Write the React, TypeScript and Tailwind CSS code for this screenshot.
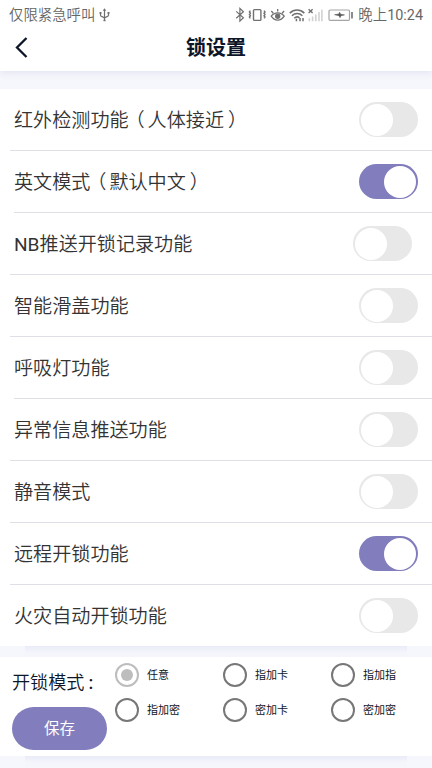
import { useState } from 'react'

interface Setting {
  label: string
  on: boolean
  divider?: string
  end?: string
}

const initialSettings: Setting[] = [
  { label: '红外检测功能（人体接近）', on: false },
  { label: '英文模式（默认中文）', on: true, divider: 'ml-3.5' },
  { label: 'NB推送开锁记录功能', on: false, end: 'pr-5' },
  { label: '智能滑盖功能', on: false },
  { label: '呼吸灯功能', on: false, divider: 'ml-3.5' },
  { label: '异常信息推送功能', on: false },
  { label: '静音模式', on: false },
  { label: '远程开锁功能', on: true },
  { label: '火灾自动开锁功能', on: false },
]

const unlockModes = ['任意', '指加卡', '指加指', '指加密', '密加卡', '密加密']

// Brackets are set half-width with their own side spacing, Latin letters a bit heavier
const partClasses: Record<string, string> = {
  '（': "ml-[6.5px] mr-[3px] [font-feature-settings:'halt']",
  '）': "ml-1 mr-[5.5px] [font-feature-settings:'halt']",
  NB: 'font-normal',
}

function StatusIcons() {
  return (
    <svg width="120" height="16" viewBox="0 0 120 16" fill="none" stroke="#707070" strokeWidth="1.2">
      {/* Bluetooth */}
      <path d="M1.2 4.4l7.2 6.4-3.5 3.4V1.4l3.5 3.3-7.2 6.5" />
      {/* Vibrate */}
      <rect x="18.5" y="2.6" width="7.4" height="10.8" rx="1" strokeWidth="1.4" />
      <path d="M15.4 3.6l-1 1.3 1 1.3-1 1.3 1 1.3-1 1.3 1 1.3M29 3.6l1 1.3-1 1.3 1 1.3-1 1.3 1 1.3-1 1.3" strokeWidth="1.4" />
      {/* Eye comfort */}
      <path d="M36.2 9.2c3.3-4.5 9.7-4.5 13 0-3.3 5.3-9.7 5.3-13 0zM36.3 4l2 2.2M42.7 2v2.6M49.1 4l-2 2.2" strokeWidth="1.3" />
      <circle cx="42.7" cy="9.2" r="2.1" fill="#707070" />
      {/* Wifi */}
      <path d="M54.8 6.1c4.2-4 10.4-4 14.5 0M56.9 8.7c3-2.8 7.4-2.8 10.4 0M59.2 11.2c1.8-1.6 3.8-1.6 5.3-.4" strokeWidth="1.5" />
      <path d="M61.4 11.8v2.4M65 11v3.2M68 11v3.2" strokeWidth="1.5" />
      {/* Signal */}
      <path d="M73.6 2.2l4 3.8M77.6 2.2l-4 3.8" strokeWidth="1.4" />
      <path d="M74.4 11.3v2.9M77.6 9.4v4.8M80.8 7.4v6.8M84 5.1v9.1M86.9 2.7v11.5" stroke="#d2d2d2" strokeWidth="1.6" />
      {/* Battery */}
      <rect x="94" y="3" width="20.5" height="10.4" rx="1.2" stroke="#a5a5a5" />
      <path d="M117 5v6.6" strokeWidth="1.6" />
      <path d="M99.5 7.7l4.4-.7.6-1.8 1.2 2 3.8.7-3.6.8-.8 2-1.2-2z" fill="#555" stroke="#555" strokeWidth=".5" />
    </svg>
  )
}

function Toggle({ on, onClick }: { on: boolean; onClick: () => void }) {
  return (
    <button
      onClick={onClick}
      className={`flex h-[35px] w-[59px] items-center rounded-full px-0.5 ${
        on ? 'justify-end bg-[#827dbc]' : 'justify-start bg-[#e8e8e8]'
      }`}
    >
      <span className="size-8 rounded-full bg-white"></span>
    </button>
  )
}

// Soft strip that shows under a card
function CardShadow() {
  return <div className="mx-[25px] h-[11px] bg-linear-to-b from-[#e9ecf7] to-[#f5f6fc] to-60%"></div>
}

export default function App() {
  const [settings, setSettings] = useState(initialSettings)
  const [mode, setMode] = useState('任意')

  const toggle = (index: number) => {
    setSettings(settings.map((s, i) => (i === index ? { ...s, on: !s.on } : s)))
  }

  return (
    <div lang="zh-CN" className="flex h-screen flex-col overflow-hidden bg-[#f6f7fc] font-['Roboto','Noto_Sans_CJK_SC',sans-serif]">
      <header className="h-[71px] shrink-0 bg-white shadow-[0_2px_7px_rgba(90,100,170,0.13)]">
        {/* Status bar */}
        <div className="flex h-[30px] items-center px-[9px] text-[14.4px] text-[#666]">
          <span className="pt-0.5 font-[350]">仅限紧急呼叫</span>
          <svg className="ml-1" width="11" height="14" viewBox="0 0 11 14" fill="none" stroke="#707070" strokeWidth="1.2">
            <path d="M5.5 1v12M1.5 4.8v2.4c0 1.8 4 1.6 4 3.4M9.5 4.8v2.4c0 1.8-4 1.6-4 3.4" />
            <path d="M3.8 2.8L5.5.3l1.7 2.5zM.5 3.9h2v1.8h-2zM8.5 3.9h2v1.8h-2zM4.5 11.7h2v1.6h-2z" fill="#707070" stroke="none" />
          </svg>
          <div className="ml-auto flex items-center gap-[3px]">
            <StatusIcons />
            <span className="pt-0.5 font-[350]">晚上<span className="font-normal">10:24</span></span>
          </div>
        </div>
        {/* Title bar */}
        <div className="grid h-[34px] grid-cols-3 items-center">
          <button className="pl-[15px]">
            <svg width="13" height="21" viewBox="0 0 13 21" fill="none" stroke="#0d1529" strokeWidth="2.3">
              <path d="M11.5 1L2 10.5 11.5 20" />
            </svg>
          </button>
          <h1 className="pt-0.5 text-center text-[20px] font-bold text-[#0d1529]">锁设置</h1>
        </div>
      </header>

      <main className="mt-[18px] shrink-0">
        {/* Switch list */}
        <section className="bg-white">
          {settings.map((item, i) => (
            <div key={item.label}>
              <div className={`flex h-[61px] items-center justify-between pl-3.5 ${item.end ?? 'pr-3.5'}`}>
                <div className="flex pt-[3px] text-[19.1px] font-[350] whitespace-nowrap text-[#333]">
                  {item.label.split(/([（）]|NB)/).filter(Boolean).map((part, k) => (
                    <span key={k} className={partClasses[part]}>{part}</span>
                  ))}
                </div>
                <Toggle on={item.on} onClick={() => toggle(i)} />
              </div>
              {i < settings.length - 1 && <div className={`h-px bg-[#dfdfe8] ${item.divider ?? 'ml-2.5'}`}></div>}
            </div>
          ))}
        </section>
        <CardShadow />

        {/* Unlock mode */}
        <section className="flex h-[99px] bg-white">
          <div className="w-[115px] shrink-0 pt-[11px] pl-3">
            <p className="h-[39px] text-[18.1px] leading-[30px] font-[350] whitespace-nowrap text-[#0d1529]">
              开锁模式<span className="ml-1 font-medium">:</span>
            </p>
            <button className="h-[43px] w-[95px] rounded-full bg-[#827dbc] pt-0.5 text-[15.5px] text-white">保存</button>
          </div>
          <div className="grid flex-1 auto-rows-[35px] grid-cols-[108px_108px_auto]">
            {unlockModes.map((m) => (
              <button key={m} className="flex items-center gap-2" onClick={() => setMode(m)}>
                <span
                  className={`flex size-6 items-center justify-center rounded-full border-2 ${
                    m === mode ? 'border-[#bdbdbd]' : 'border-[#777]'
                  }`}
                >
                  {m === mode && <span className="size-3 rounded-full bg-[#bdbdbd]"></span>}
                </span>
                <span className="pt-[3px] text-[11px] text-[#0d1529]">{m}</span>
              </button>
            ))}
          </div>
        </section>
        <CardShadow />
      </main>
    </div>
  )
}
